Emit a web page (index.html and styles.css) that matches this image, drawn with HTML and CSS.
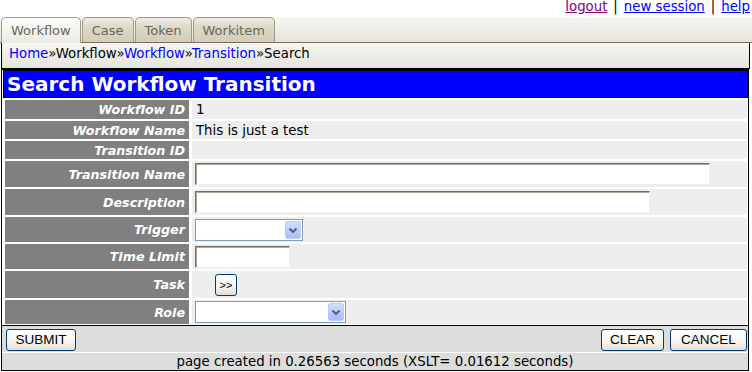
FILE: index.html
```html
<!DOCTYPE html>
<html lang="en">
<head>
    <meta charset="UTF-8">
    <meta name="viewport" content="width=device-width, initial-scale=1.0">
    <title>Search Workflow Transition</title>
    <link rel="stylesheet" href="styles.css">
</head>
<body>
    <!-- Session links -->
    <div class="toplinks">
        <a href="#" class="visited">logout</a><span class="sep">|</span><a href="#">new session</a><span class="sep">|</span><a href="#">help</a>
    </div>

    <!-- Tabs -->
    <div class="tabs">
        <span class="tab active">Workflow</span>
        <span class="tab">Case</span>
        <span class="tab">Token</span>
        <span class="tab">Workitem</span>
    </div>
    <div class="crumbs">
        <a href="#">Home</a>»Workflow»<a href="#">Workflow</a>»<a href="#">Transition</a>»Search
    </div>

    <!-- Search form -->
    <form class="search">
        <h2 class="title">Search Workflow Transition</h2>
        <div class="fields">
            <div class="label">Workflow ID</div>
            <div class="value">1</div>

            <div class="label">Workflow Name</div>
            <div class="value">This is just a test</div>

            <div class="label">Transition ID</div>
            <div class="value"></div>

            <div class="label">Transition Name</div>
            <div class="value input-cell"><input type="text" class="text w-name"></div>

            <div class="label">Description</div>
            <div class="value input-cell"><input type="text" class="text w-desc"></div>

            <div class="label">Trigger</div>
            <div class="value input-cell">
                <span class="select w-trigger">
                    <select></select>
                    <span class="arrow"><svg width="14" height="16" viewBox="0 0 14 16"><polyline points="3.5,6.5 7,10 10.5,6.5" fill="none" stroke="#4d6185" stroke-width="2"/></svg></span>
                </span>
            </div>

            <div class="label">Time Limit</div>
            <div class="value input-cell"><input type="text" class="text w-time"></div>

            <div class="label">Task</div>
            <div class="value input-cell"><button type="button" class="more">&gt;&gt;</button></div>

            <div class="label">Role</div>
            <div class="value input-cell">
                <span class="select w-role">
                    <select></select>
                    <span class="arrow"><svg width="14" height="16" viewBox="0 0 14 16"><polyline points="3.5,6.5 7,10 10.5,6.5" fill="none" stroke="#4d6185" stroke-width="2"/></svg></span>
                </span>
            </div>
        </div>
        <div class="buttons">
            <button type="submit" class="btn btn-submit">SUBMIT</button>
            <span class="right">
                <button type="reset" class="btn btn-clear">CLEAR</button>
                <button type="button" class="btn btn-cancel">CANCEL</button>
            </span>
        </div>
        <div class="footer">page created in 0.26563 seconds (XSLT= 0.01612 seconds)</div>
    </form>
</body>
</html>
```

FILE: styles.css
```css
body {
    margin: 0;
    font-family: "DejaVu Sans", Verdana, sans-serif;
    font-size: 13.3px;
    color: #000;
    background: #fff;
}

/* Session links */
.toplinks {
    height: 17px;
    line-height: 13px;
    text-align: right;
    padding-right: 2px;
}
.toplinks a {
    color: #00f;
}
.toplinks a.visited {
    color: #800080;
}
.sep {
    margin: 0 6px;
}

/* Tabs */
.tabs {
    display: flex;
    align-items: flex-end;
    height: 25px;
    padding-left: 1px;
    background: linear-gradient(#f7f7f3, #efefe9 45%, #e4e3da);
    border-bottom: 1px solid #806d5a;
}
.tab {
    box-sizing: border-box;
    height: 25px;
    padding: 4px 9px 0;
    line-height: 18px;
    margin-right: 1px;
    border: 1px solid #a19a85;
    border-bottom: 0;
    border-radius: 5px 5px 0 0;
    color: #6b6658;
    font-size: 13px;
    background: linear-gradient(#efede4, #dcd8c7 40%, #d3cebb);
}
.tab.active {
    height: 26px;
    margin-bottom: -1px;
    background: linear-gradient(#fdfdfb, #f3f2ec 50%, #ebeae3);
}

.crumbs {
    box-sizing: border-box;
    width: 749px;
    height: 26px;
    margin-left: 1px;
    padding: 2px 7px 0;
    line-height: 18px;
    border: 1px solid #000;
    border-top: 0;
    background: linear-gradient(#f7f7f3, #eeeee8 45%, #e4e3da);
}
.crumbs a {
    color: #00f;
    text-decoration: none;
}

/* Search form */
.search {
    box-sizing: border-box;
    width: 748px;
    margin: 0 0 0 1px;
    border: 1px solid #000;
}
.title {
    margin: 0 0 0 1px;
    height: 25px;
    padding: 1px 0 0 3px;
    line-height: 25px;
    border: 1px solid #000;
    background: #00f;
    color: #fff;
    font-size: 20px;
    font-weight: bold;
}

.fields {
    display: grid;
    grid-template-columns: 184px 1fr;
    grid-template-rows: 19px 18px 18px 26px 26px 25px 25px 27px 24px;
    column-gap: 3px;
    row-gap: 2px;
    padding: 2px 1px 1px 3px;
}
.label {
    display: flex;
    align-items: center;
    justify-content: flex-end;
    padding-right: 4px;
    background: #808080;
    color: #fff;
    font-size: 12.7px;
    font-weight: bold;
    font-style: italic;
}
.value {
    display: flex;
    align-items: center;
    padding-left: 4px;
    background: #eee;
}
.value.input-cell {
    padding-left: 3px;
}

.text {
    box-sizing: border-box;
    height: 22px;
    margin: 0;
    padding: 1px 2px;
    border: 1px solid;
    border-color: #716f64 #f1efe2 #f1efe2 #716f64;
    box-shadow: inset 1px 1px 0 #aca899;
    background: #fff;
    font: inherit;
}
.w-name {
    width: 515px;
}
.w-desc {
    width: 455px;
}
.w-time {
    width: 95px;
}

.select {
    display: inline-flex;
    box-sizing: border-box;
    height: 22px;
    padding: 1px;
    border: 1px solid #7f9db9;
    background: #fff;
}
.select select {
    flex: 1;
    min-width: 0;
    margin: 0;
    border: 0;
    background: transparent;
    appearance: none;
    -webkit-appearance: none;
}
.arrow {
    box-sizing: border-box;
    width: 16px;
    height: 18px;
    border: 1px solid #bccdf5;
    border-radius: 2px;
    background: linear-gradient(#d2dffd, #b9cbf8 55%, #a9bff4);
}
.arrow svg {
    display: block;
}
.w-trigger {
    width: 108px;
}
.w-role {
    width: 151px;
}

.more {
    box-sizing: border-box;
    width: 22px;
    height: 22px;
    margin-left: 20px;
    padding: 0;
    border: 1px solid #003c74;
    border-radius: 3px;
    background: linear-gradient(#fff, #f5f4ef 60%, #e3e0d3);
    font-family: "Liberation Sans", Arial, sans-serif;
    font-size: 11px;
    color: #000;
}

/* Buttons and footer */
.buttons {
    box-sizing: border-box;
    display: flex;
    justify-content: space-between;
    height: 27px;
    padding: 3px 1px 0 4px;
    border-top: 1px solid #000;
    background: #ddd;
}
.right {
    display: flex;
    gap: 6px;
}
.btn {
    box-sizing: border-box;
    height: 22px;
    padding: 0 0 1px;
    border: 1px solid #003c74;
    border-radius: 3px;
    background: linear-gradient(#fff, #f5f4ef 60%, #e3e0d3);
    font-family: "Liberation Sans", Arial, sans-serif;
    font-size: 13.5px;
    color: #000;
}
.btn-submit {
    width: 70px;
}
.btn-clear {
    width: 63px;
}
.btn-cancel {
    width: 77px;
}
.footer {
    margin-top: 1px;
    height: 17px;
    line-height: 17px;
    text-align: center;
    background: #ddd;
}
```
